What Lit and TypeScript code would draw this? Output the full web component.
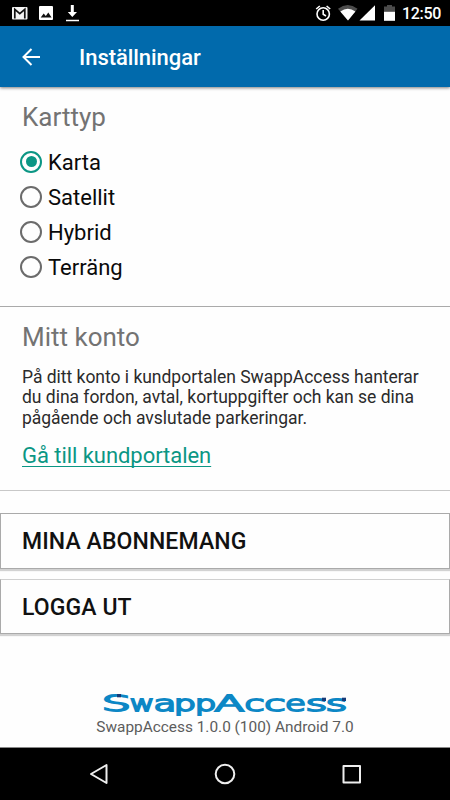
import { LitElement, html, css, svg } from "lit";
import { customElement, property, state } from "lit/decorators.js";
import { classMap } from "lit/directives/class-map.js";

@customElement("status-bar")
class StatusBar extends LitElement {
  static styles = css`
    :host { display: flex; justify-content: space-between; height: 26px; background: #000; color: #fff; }
    svg { display: block; }
    .right { display: flex; }
    .clock { width: 48px; font: 500 16px/27px Roboto, sans-serif; letter-spacing: -0.3px; white-space: nowrap; }
  `;
  render() {
    return html`
      <svg width="90" height="26" viewBox="0 0 90 26">
        <rect x="12" y="7" width="15.5" height="12.5" rx="1" fill="#f4f4f4" />
        <path d="M14.8 18.5V9.3L19.8 13.6L24.8 9.3V18.5" fill="none" stroke="#111" stroke-width="1.7" />
        <rect x="39" y="6" width="14" height="14" rx="1" fill="#fff" />
        <path d="M40.7 17.5L43.7 13.5L45.8 16L48.3 12.5L51.6 17.5Z" fill="#111" />
        <path d="M70.8 5H73.8V12H77L72.3 17L67.8 12H70.8ZM66 19.8H79V21.3H66Z" fill="#fff" />
      </svg>
      <div class="right">
        <svg width="90" height="26" viewBox="312 0 90 26">
          <g fill="none" stroke="#fff" stroke-width="1.6">
            <circle cx="323.2" cy="14" r="6.2" />
            <path d="M323.2 10V14.3L326 16M316.2 9L319.8 6M330.2 9L326.6 6" />
          </g>
          <path d="M338 8.7Q347.8 1.3 357.5 8.7L348 20.6Z" fill="#4c4c4c" />
          <path d="M340.3 11.4Q347.8 6.3 355.4 11.4L348 20.6Z" fill="#fff" />
          <path d="M359.5 20.6L375 5.2V20.6Z" fill="#fff" />
          <path d="M384 6.5H387V5H392V6.5H395V12H384Z" fill="#4c4c4c" />
          <rect x="384" y="11.8" width="11" height="9" fill="#fff" />
        </svg>
        <div class="clock">12:50</div>
      </div>
    `;
  }
}

@customElement("map-option")
class MapOption extends LitElement {
  @property() label = "";
  @property({ type: Boolean }) checked = false;
  static styles = css`
    :host { display: flex; align-items: center; height: 35px; gap: 6px; font: 22px/35px Roboto, sans-serif; color: #0a0a0a; }
    .ring { box-sizing: border-box; width: 22px; height: 22px; border: 2px solid #6b6b6b; border-radius: 50%; display: grid; place-items: center; }
    .on { border-color: #0b9684; }
    .on::after { content: ""; width: 11px; height: 11px; border-radius: 50%; background: #0b9684; }
    .label { white-space: nowrap; padding-top: 2px; }
  `;
  render() {
    return html`<span class=${classMap({ ring: true, on: this.checked })}></span><span class="label">${this.label}</span>`;
  }
}

// Each letter of the wordmark: left and right edge, then its side bearings as shares of the advance.
const LETTERS: [string, number, number, number, number][] = [
  ["S", 4, 29, 0.104, 0.9],
  ["w", 30, 54, 0.05, 0.95],
  ["a", 55, 74, 0.1, 0.85],
  ["p", 76, 95, 0.14, 0.91],
  ["p", 97, 115.5, 0.14, 0.91],
  ["A", 114, 145, 0.01, 0.99],
  ["c", 145.5, 163, 0.1, 0.89],
  ["c", 165.5, 184, 0.1, 0.89],
  ["e", 186, 205, 0.09, 0.91],
  ["s", 207, 226, 0.1, 0.9],
  ["s", 227, 246, 0.1, 0.9],
];

@customElement("brand-mark")
class BrandMark extends LitElement {
  static styles = css`
    :host { display: block; height: 28px; }
    svg { display: block; margin: 0 auto; }
    .word { font: 200 21.5px "DejaVu Sans Light", "DejaVu Sans", sans-serif; fill: #0c87c5; stroke: #0c87c5; stroke-width: 1.8px; }
  `;
  render() {
    const dots = [[17, 5], [222, 8.7], [242, 8.7]];
    return html`<svg width="250" height="28" viewBox="0 0 250 28">
      <text class="word" y="21.8">${LETTERS.map(([ch, a, b, f, g]) => {
        const len = (b - a - 1.8) / (g - f);
        return svg`<tspan x=${a + 0.9 - f * len} textLength=${len} lengthAdjust="spacingAndGlyphs">${ch}</tspan>`;
      })}</text>
      ${dots.map(([x, y]) => svg`<rect x=${x} y=${y} width="4" height="3.3" fill="#173a78" />`)}
    </svg>`;
  }
}

@customElement("app-root")
class AppRoot extends LitElement {
  @state() selected = "Karta";
  static styles = css`
    :host { display: flex; flex-direction: column; width: 450px; height: 800px; overflow: hidden; background: #fefefe; font-family: Roboto, sans-serif; }
    * { box-sizing: border-box; }
    .bar { display: flex; align-items: center; flex: none; height: 61px; padding-left: 21px; background: #016aac; box-shadow: 0 1px 3px rgba(0,0,0,.5); color: #fff; }
    .title { margin-left: 38px; font: 500 22px/30px Roboto, sans-serif; letter-spacing: -0.05px; padding-top: 2px; }
    h2 { margin: 0; font: 26px/32px Roboto, sans-serif; color: #737373; white-space: nowrap; }
    .types { height: 220px; padding: 14px 20px 0; border-bottom: 1px solid #aaa; }
    .types h2 { padding-left: 2px; margin-bottom: 11px; }
    .account { height: 185px; padding: 14px 22px 0; border-bottom: 1px solid #c8c8c8; }
    p { margin: 14px 0 0; font: 17.5px/20.6px Roboto, sans-serif; letter-spacing: -0.02px; color: #2b2b2b; white-space: nowrap; }
    .link { display: inline-block; margin-top: 14px; font: 22px/28px Roboto, sans-serif; letter-spacing: -0.05px; color: #0b9684; text-decoration: underline; text-decoration-thickness: 1px; text-underline-offset: 3px; text-decoration-skip-ink: none; white-space: nowrap; }
    .actions { display: flex; flex-direction: column; gap: 10px; padding-top: 22px; }
    .action { height: 55.5px; padding: 1px 21px 0; border: 1px solid #aaa; background: #fefefe; box-shadow: 0 2px 1px #d2d2d2; text-align: left; font: 500 23px/54px Roboto, sans-serif; letter-spacing: 0.1px; color: #111; }
    .second { border-top-color: #d0d0d0; }
    footer { margin-top: 55px; height: 58px; }
    .version { text-align: center; font: 15.4px/20px Roboto, sans-serif; color: #5c5c5c; white-space: nowrap; }
    nav { flex: none; height: 53px; margin-top: auto; background: #000; border-top: 1px solid #888; }
    nav svg { display: block; }
  `;
  render() {
    return html`
      <status-bar></status-bar>
      <header class="bar">
        <svg width="20" height="20" viewBox="0 0 20 20" fill="none" stroke="#fff" stroke-width="2"><path d="M19 10H2.5M10.5 2L2.5 10L10.5 18" /></svg>
        <div class="title">Inställningar</div>
      </header>
      <section class="types">
        <h2>Karttyp</h2>
        ${["Karta", "Satellit", "Hybrid", "Terräng"].map((t) => html`<map-option .label=${t} ?checked=${t === this.selected} @click=${() => (this.selected = t)}></map-option>`)}
      </section>
      <section class="account">
        <h2>Mitt konto</h2>
        <p>På ditt konto i kundportalen SwappAccess hanterar<br />du dina fordon, avtal, kortuppgifter och kan se dina<br />pågående och avslutade parkeringar.</p>
        <a class="link">Gå till kundportalen</a>
      </section>
      <div class="actions">
        <button class="action">MINA ABONNEMANG</button>
        <button class="action second">LOGGA UT</button>
      </div>
      <footer>
        <brand-mark></brand-mark>
        <div class="version">SwappAccess 1.0.0 (100) Android 7.0</div>
      </footer>
      <nav>
        <svg width="450" height="52" viewBox="0 748 450 52" fill="none" stroke="#eee" stroke-width="2" stroke-linejoin="round">
          <path d="M106.5 765V783L91 774Z" /><circle cx="225" cy="774" r="9.3" /><rect x="343.5" y="766" width="16.5" height="16.5" />
        </svg>
      </nav>
    `;
  }
}
